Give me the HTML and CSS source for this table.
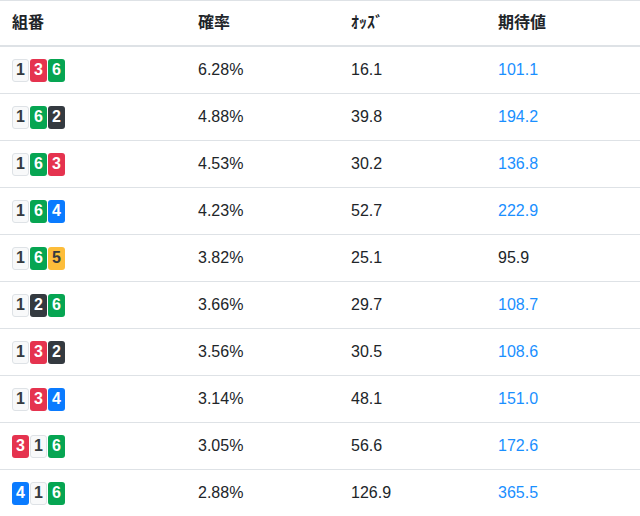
FILE: index.html
```html
<!DOCTYPE html>
<html lang="ja">
<head>
<meta charset="utf-8">
<title>組番</title>
<link rel="stylesheet" href="styles.css">
</head>
<body>
<table class="odds-table">
  <colgroup>
    <col class="c1"><col class="c2"><col class="c3"><col class="c4">
  </colgroup>
  <thead>
    <tr><th>組番</th><th>確率</th><th>ｵｯｽﾞ</th><th>期待値</th></tr>
  </thead>
  <tbody>
    <tr><td><div class="combo"><span class="b b1">1</span><span class="b b3">3</span><span class="b b6">6</span></div></td><td>6.28%</td><td>16.1</td><td class="ev">101.1</td></tr>
    <tr><td><div class="combo"><span class="b b1">1</span><span class="b b6">6</span><span class="b b2">2</span></div></td><td>4.88%</td><td>39.8</td><td class="ev">194.2</td></tr>
    <tr><td><div class="combo"><span class="b b1">1</span><span class="b b6">6</span><span class="b b3">3</span></div></td><td>4.53%</td><td>30.2</td><td class="ev">136.8</td></tr>
    <tr><td><div class="combo"><span class="b b1">1</span><span class="b b6">6</span><span class="b b4">4</span></div></td><td>4.23%</td><td>52.7</td><td class="ev">222.9</td></tr>
    <tr><td><div class="combo"><span class="b b1">1</span><span class="b b6">6</span><span class="b b5">5</span></div></td><td>3.82%</td><td>25.1</td><td>95.9</td></tr>
    <tr><td><div class="combo"><span class="b b1">1</span><span class="b b2">2</span><span class="b b6">6</span></div></td><td>3.66%</td><td>29.7</td><td class="ev">108.7</td></tr>
    <tr><td><div class="combo"><span class="b b1">1</span><span class="b b3">3</span><span class="b b2">2</span></div></td><td>3.56%</td><td>30.5</td><td class="ev">108.6</td></tr>
    <tr><td><div class="combo"><span class="b b1">1</span><span class="b b3">3</span><span class="b b4">4</span></div></td><td>3.14%</td><td>48.1</td><td class="ev">151.0</td></tr>
    <tr><td><div class="combo"><span class="b b3">3</span><span class="b b1">1</span><span class="b b6">6</span></div></td><td>3.05%</td><td>56.6</td><td class="ev">172.6</td></tr>
    <tr><td><div class="combo"><span class="b b4">4</span><span class="b b1">1</span><span class="b b6">6</span></div></td><td>2.88%</td><td>126.9</td><td class="ev">365.5</td></tr>
  </tbody>
</table>
</body>
</html>
```

FILE: styles.css
```css
html, body {
  margin: 0;
  padding: 0;
  background: #fff;
}
body {
  font-family: "Liberation Sans", Arial, "Noto Sans CJK JP", sans-serif;
  font-size: 16px;
  color: #212529;
}
.odds-table {
  width: 640px;
  border-collapse: collapse;
  table-layout: fixed;
}
.c1 { width: 186px; }
.c2 { width: 153px; }
.c3 { width: 147px; }
.c4 { width: 154px; }
.odds-table th {
  text-align: left;
  font-weight: 700;
  padding: 12px;
  line-height: 20px;
  border-top: 1px solid #dee2e6;
  border-bottom: 2px solid #dee2e6;
}
.odds-table td {
  padding: 12px;
  line-height: 22px;
  border-top: 1px solid #dee2e6;
  vertical-align: middle;
}
.odds-table td.ev {
  color: #1a8fff;
}
.combo {
  display: flex;
  gap: 1px;
  height: 22px;
  align-items: center;
}
.b {
  box-sizing: border-box;
  display: inline-flex;
  align-items: center;
  justify-content: center;
  width: 17px;
  height: 23px;
  border-radius: 3px;
  font-weight: 700;
  font-size: 16px;
  color: #fff;
}
.b1 { background: #f8f9fa; color: #343a40; border: 1px solid #dee2e6; }
.b2 { background: #343a40; }
.b3 { background: #e5334f; }
.b4 { background: #0a7bff; }
.b5 { background: #fdbd3a; color: #343a40; }
.b6 { background: #06a552; }
```
